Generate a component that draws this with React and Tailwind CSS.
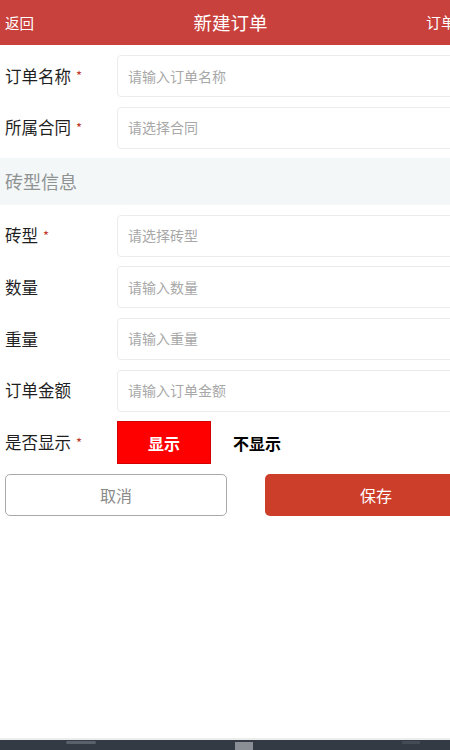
const fields = [
    { label: '订单名称', placeholder: '请输入订单名称', required: true },
    { label: '所属合同', placeholder: '请选择合同', required: true },
]

const brickFields = [
    { label: '砖型', placeholder: '请选择砖型', required: true },
    { label: '数量', placeholder: '请输入数量' },
    { label: '重量', placeholder: '请输入重量' },
    { label: '订单金额', placeholder: '请输入订单金额' },
]

const Label = ({ text, required }) => (
    <div className="w-[117px] shrink-0 pl-[5px] flex items-center text-[16.5px] text-[#1f1f1f]">
        {text}
        {required && <span className="ml-[5px] text-[13px] text-[#c0392b]">*</span>}
    </div>
)

const Field = ({ field }) => (
    <div className="flex h-[42px]">
        <Label text={field.label} required={field.required} />
        <div className="flex-1 mr-[5px] border border-[#ececec] rounded-[4px] flex items-center pl-[10px] text-[14px] text-[#a8a8a8]">
            {field.placeholder}
        </div>
    </div>
)

export default function App() {
    return (
        <div
            className="w-[450px] h-[750px] overflow-hidden bg-white flex flex-col"
            style={{ fontFamily: '"Noto Sans CJK SC", "Noto Sans", sans-serif' }}
        >
            <div className="w-[492px] flex-1 flex flex-col">
                {/* header */}
                <div className="h-[45px] bg-[#c9413c] text-white flex items-center shrink-0">
                    <span className="pl-[5px] text-[14.5px] w-[35px] shrink-0">返回</span>
                    <span className="flex-1 text-center text-[18.5px]">新建订单</span>
                    <span className="pr-[6px] text-[15px]">订单列表</span>
                </div>

                <div className="flex flex-col gap-[9.6px] pt-[10px]">
                    {fields.map(f => <Field key={f.label} field={f} />)}

                    <div className="h-[47px] bg-[#f4f7f8] flex items-center pl-[5px] text-[18px] text-[#8f9394]">
                        砖型信息
                    </div>

                    {brickFields.map(f => <Field key={f.label} field={f} />)}

                    <div className="flex h-[43px]">
                        <Label text="是否显示" required />
                        <div className="w-[94px] bg-[#ff0000] border border-[#d40000] flex items-center justify-center text-white font-bold text-[16px]">
                            显示
                        </div>
                        <div className="ml-[22px] flex items-center font-bold text-[16px] text-black">
                            不显示
                        </div>
                    </div>

                    <div className="flex h-[42px] px-[5px] gap-[38px]">
                        <button className="w-[222px] border border-[#a9a9a9] rounded-[5px] text-[16px] text-[#8a8a8a] bg-white">
                            取消
                        </button>
                        <button className="w-[222px] rounded-[5px] text-[16px] text-white bg-[#cc3e2a]">
                            保存
                        </button>
                    </div>
                </div>
            </div>

            {/* system nav bar peeking in */}
            <div className="h-[2px] bg-[#eceeed] shrink-0" />
            <div className="h-[10px] bg-[#343a44] shrink-0 relative">
                <div className="absolute left-[66px] top-[1px] w-[30px] h-[3px] bg-[#5b616b] rounded-sm" />
                <div className="absolute left-[235px] top-[2px] w-[18px] h-[8px] bg-[#8a8f96]" />
                <div className="absolute left-[402px] top-[1px] w-[18px] h-[3px] bg-[#454b55]" />
            </div>
        </div>
    )
}
